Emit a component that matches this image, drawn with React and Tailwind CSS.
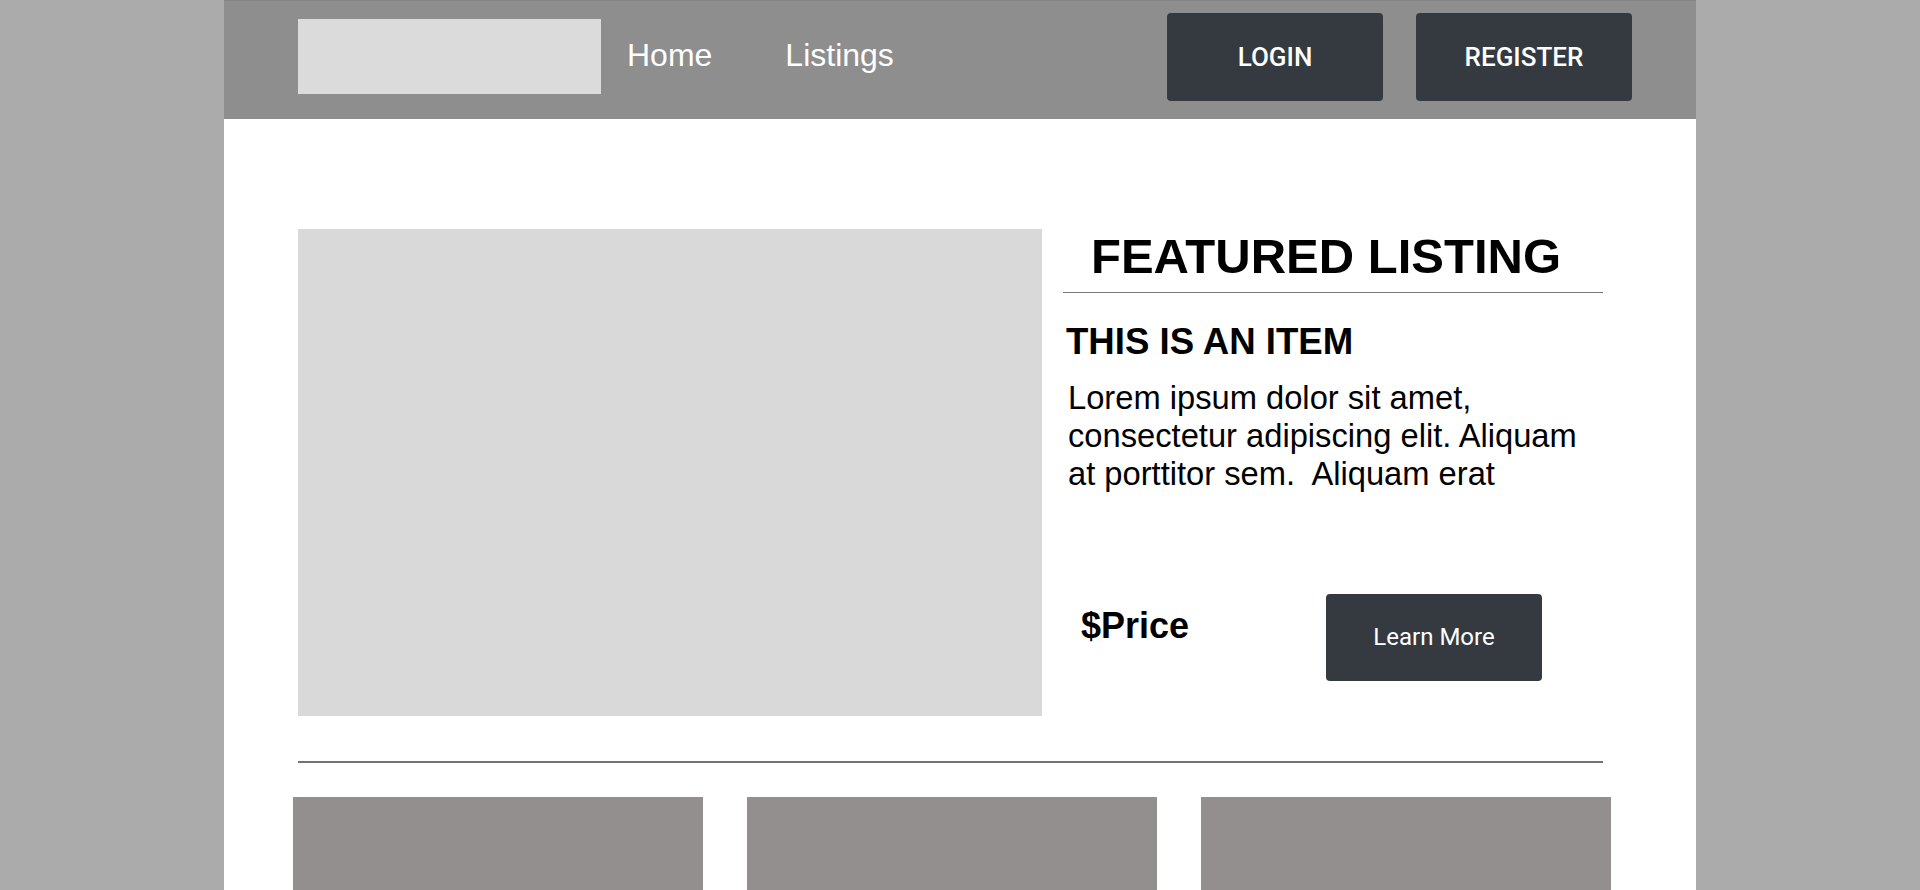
import React from 'react';

const navLinks = ['Home', 'Listings'];

function HeaderButton({ children }) {
  return (
    <button className="w-[216px] h-[88px] rounded-[4px] bg-[#343a40] text-white text-[26px] font-medium font-['Roboto',sans-serif]">
      {children}
    </button>
  );
}

export default function App() {
  return (
    <div className="h-[890px] overflow-hidden bg-[#ababab] font-['Liberation_Sans',Arial,sans-serif]">
      <div className="mx-auto w-[1472px] h-[890px] overflow-hidden bg-white">
        {/* Top bar */}
        <header className="h-[119px] bg-[#8e8e8e] border-t border-[#858585] flex items-start pl-[74px] pr-[64px]">
          <div className="mt-[18px] w-[303px] h-[75px] bg-[#dbdbdb]" />
          <nav className="mt-[36px] ml-[26px] flex gap-[73px] text-[32px] leading-[37px] text-white">
            {navLinks.map((l) => (
              <a key={l}>{l}</a>
            ))}
          </nav>
          <div className="ml-auto mt-[12px] flex gap-[33px]">
            <HeaderButton>LOGIN</HeaderButton>
            <HeaderButton>REGISTER</HeaderButton>
          </div>
        </header>

        {/* Featured listing */}
        <section className="pl-[74px] pt-[110px] flex">
          <div className="w-[744px] h-[487px] bg-[#d9d9d9]" />
          <div className="ml-[21px] w-[540px]">
            <h1 className="mt-[3px] pl-[28px] text-[49px] leading-none font-bold text-black">FEATURED LISTING</h1>
            <div className="mt-[11px] h-px bg-[#777]" />
            <h2 className="mt-[31px] pl-[3px] text-[36.6px] leading-none font-bold text-black">THIS IS AN ITEM</h2>
            <p className="mt-[18px] pl-[5px] w-[535px] text-[32.7px] leading-[38px] text-black">
              Lorem ipsum dolor sit amet, consectetur adipiscing elit. Aliquam at porttitor sem.&nbsp; Aliquam erat
            </p>
            <div className="mt-[101px] flex items-start pl-[18px]">
              <span className="mt-[14px] w-[245px] text-[36px] leading-none font-bold text-black">$Price</span>
              <button className="w-[216px] h-[87px] rounded-[4px] bg-[#343a40] text-white text-[24px] font-['Roboto',sans-serif]">
                Learn More
              </button>
            </div>
          </div>
        </section>

        <div className="ml-[74px] mt-[45px] w-[1305px] h-[2px] bg-[#737373]" />

        {/* Listing cards */}
        <div className="pl-[69px] mt-[34px] flex gap-[44px]">
          {[0, 1, 2].map((i) => (
            <div key={i} className="w-[410px] h-[200px] bg-[#938f8e]" />
          ))}
        </div>
      </div>
    </div>
  );
}
